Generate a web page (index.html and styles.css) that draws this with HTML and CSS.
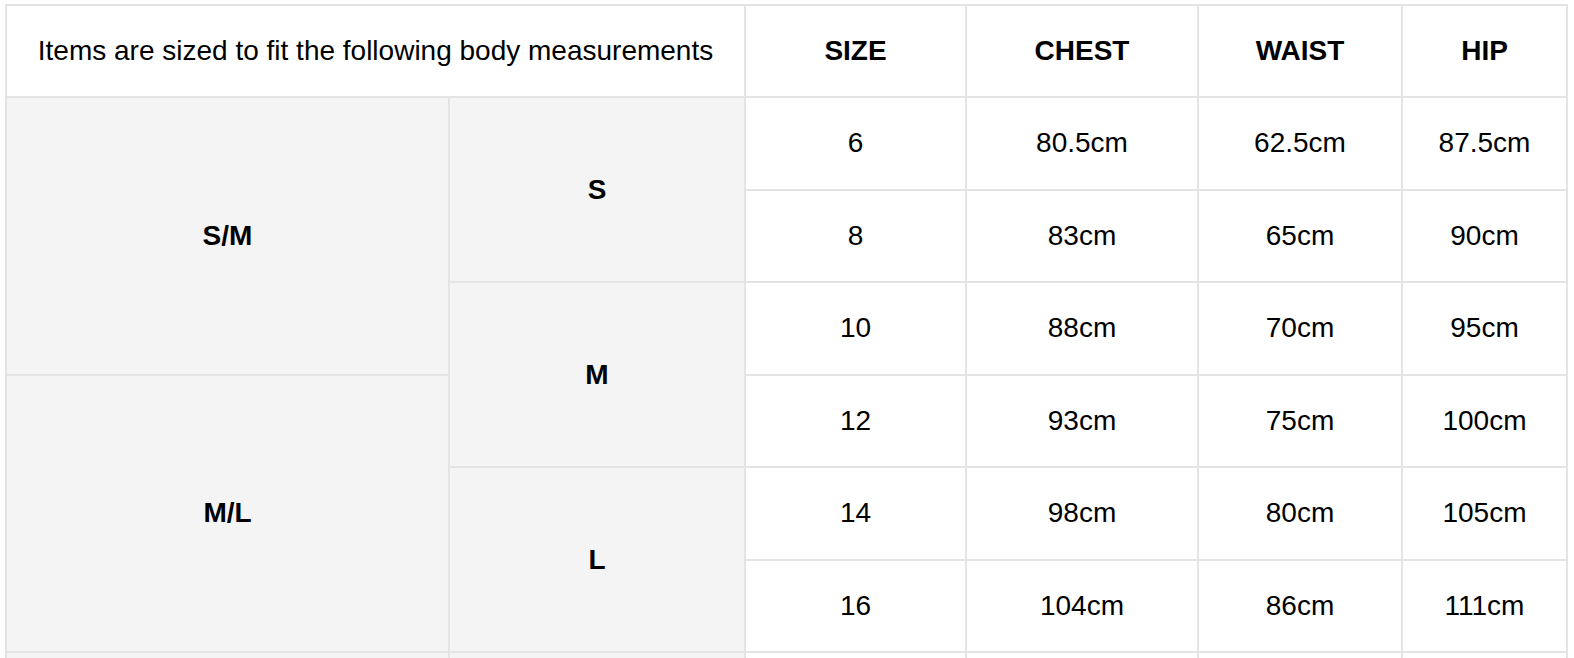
FILE: index.html
```html
<!DOCTYPE html>
<html lang="en">
<head>
<meta charset="utf-8">
<title>Size guide</title>
<link rel="stylesheet" href="styles.css">
</head>
<body>
<table class="size-table">
  <colgroup>
    <col class="c-group">
    <col class="c-letter">
    <col class="c-size">
    <col class="c-chest">
    <col class="c-waist">
    <col class="c-hip">
  </colgroup>
  <thead>
    <tr class="head-row">
      <th colspan="2" class="intro">Items are sized to fit the following body measurements</th>
      <th>SIZE</th>
      <th>CHEST</th>
      <th>WAIST</th>
      <th>HIP</th>
    </tr>
  </thead>
  <tbody>
    <tr>
      <td rowspan="3" class="label">S/M</td>
      <td rowspan="2" class="label">S</td>
      <td>6</td><td>80.5cm</td><td>62.5cm</td><td>87.5cm</td>
    </tr>
    <tr>
      <td>8</td><td>83cm</td><td>65cm</td><td>90cm</td>
    </tr>
    <tr>
      <td rowspan="2" class="label">M</td>
      <td>10</td><td>88cm</td><td>70cm</td><td>95cm</td>
    </tr>
    <tr>
      <td rowspan="3" class="label">M/L</td>
      <td>12</td><td>93cm</td><td>75cm</td><td>100cm</td>
    </tr>
    <tr>
      <td rowspan="2" class="label">L</td>
      <td>14</td><td>98cm</td><td>80cm</td><td>105cm</td>
    </tr>
    <tr>
      <td>16</td><td>104cm</td><td>86cm</td><td>111cm</td>
    </tr>
    <tr class="next-row">
      <td class="label"></td>
      <td class="label"></td>
      <td></td><td></td><td></td><td></td>
    </tr>
  </tbody>
</table>
</body>
</html>
```

FILE: styles.css
```css
html, body {
  margin: 0;
  padding: 0;
  background: #ffffff;
}

body {
  font-family: "Liberation Sans", Arial, sans-serif;
  color: #000000;
  overflow: hidden;
}

.size-table {
  margin: 4px 0 0 5px;
  width: 1563px;
  table-layout: fixed;
  border-collapse: separate;
  border-spacing: 0;
  border-top: 2px solid #e4e4e4;
  border-left: 2px solid #e4e4e4;
  font-size: 28px;
}

.c-group { width: 443px; }
.c-letter { width: 296px; }
.c-size { width: 221px; }
.c-chest { width: 232px; }
.c-waist { width: 204px; }
.c-hip { width: 165px; }

.size-table th,
.size-table td {
  box-sizing: border-box;
  padding: 0;
  text-align: center;
  vertical-align: middle;
  border-right: 2px solid #e4e4e4;
  border-bottom: 2px solid #e4e4e4;
  line-height: 32px;
}

.head-row th {
  height: 92px;
  font-weight: bold;
}

.head-row th.intro {
  font-weight: normal;
}

.size-table tbody tr {
  height: 92.5px;
}

.size-table td.label {
  background: #f4f4f4;
  font-weight: bold;
}
```
